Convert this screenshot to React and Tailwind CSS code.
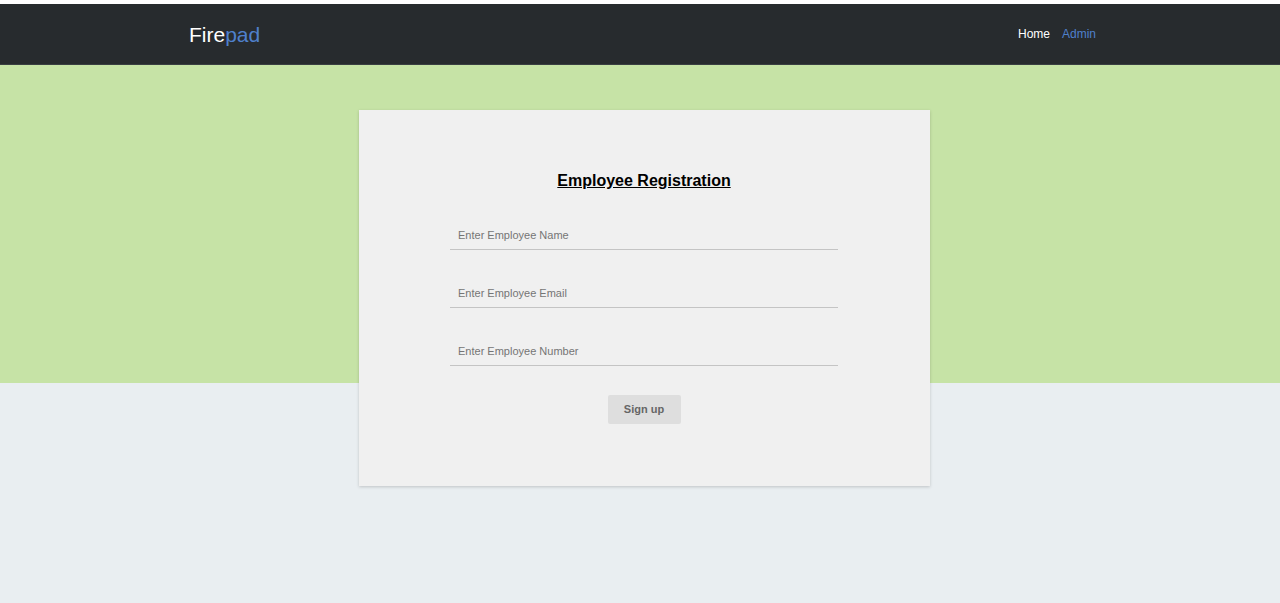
export default function App() {
  const fields = [
    "Enter Employee Name",
    "Enter Employee Email",
    "Enter Employee Number",
  ];

  return (
    <div className="min-h-[603px] bg-white pt-[4px] font-['Liberation_Sans',Arial,sans-serif]">
      {/* Navbar */}
      <nav className="h-[61px] bg-[#272b2e] border-b border-[#3a3f42] flex items-center justify-between pl-[189px] pr-[184px]">
        <div className="text-[21px] leading-none">
          <span className="text-white">Fire</span>
          <span className="text-[#4f80cc]">pad</span>
        </div>
        <div className="flex items-center gap-[12px] text-[12px]">
          <span className="text-white">Home</span>
          <span className="text-[#4f80cc]">Admin</span>
        </div>
      </nav>

      {/* Main */}
      <main className="h-[538px] bg-[linear-gradient(to_bottom,#c6e3a6_318px,#e9eef1_318px)] pt-[45px] pl-[8px] flex justify-center">
        <div className="w-[571px] h-[376px] bg-[#f0f0f0] shadow-[0_1px_3px_rgba(0,0,0,0.18)] flex flex-col items-center pt-[61px]">
          <h2 className="text-[16px] font-bold underline text-black leading-[20px]">
            Employee Registration
          </h2>
          <div className="w-[388px] mt-[26px] flex flex-col gap-[25px]">
            {fields.map((f) => (
              <input
                key={f}
                placeholder={f}
                className="w-full h-[33px] bg-transparent border-b border-[#c4c4c4] px-[8px] pt-[4px] text-[11px] outline-none placeholder:text-[#757575]"
              />
            ))}
          </div>
          <button className="mt-[29px] w-[73px] h-[29px] bg-[#dedede] rounded-[2px] text-[11px] font-bold text-[#666]">
            Sign up
          </button>
        </div>
      </main>
    </div>
  );
}
